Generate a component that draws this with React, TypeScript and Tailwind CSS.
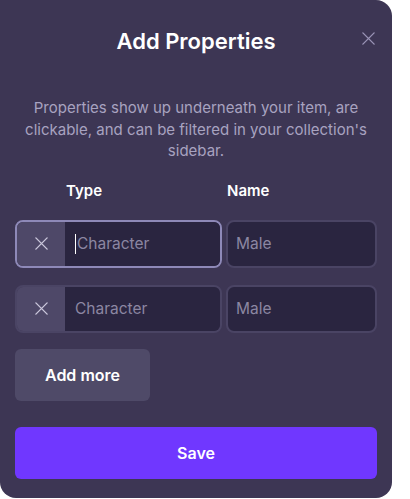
import { useState } from "react";

function XIcon({ className }: { className?: string }) {
  return (
    <svg viewBox="0 0 16 16" className={className} fill="none" stroke="currentColor" strokeWidth={1.5} strokeLinecap="round">
      <path d="M2 2l12 12M14 2L2 14" />
    </svg>
  );
}

function PropertyRow({ focused }: { focused?: boolean }) {
  return (
    <div className="flex gap-[4px] h-[48px]">
      <div
        className={
          "flex w-[207px] rounded-[8px] border-2 overflow-hidden " +
          (focused ? "border-[#8e89b8]" : "border-[#4a4464]")
        }
      >
        <button className="w-[48px] shrink-0 bg-[#4e4868] flex items-center justify-center text-[#c9c5da]">
          <XIcon className="w-[15px] h-[15px]" />
        </button>
        <div className="flex-1 bg-[#2a2540] flex items-center pl-[10px]">
          {focused && <span className="w-px h-[20px] bg-white mr-px" />}
          <span className="text-[15.5px] text-[#8c87a2]">Character</span>
        </div>
      </div>
      <div className="flex-1 rounded-[8px] border-2 border-[#4a4464] bg-[#2a2540] flex items-center pl-[8px]">
        <span className="text-[15.5px] text-[#8c87a2]">Male</span>
      </div>
    </div>
  );
}

export default function App() {
  const [rows] = useState([true, false]);

  return (
    <main className="min-h-screen bg-white" style={{ fontFamily: "Inter, 'Noto Sans', sans-serif" }}>
      <div className="relative w-[392px] h-[498px] bg-[#3d3654] rounded-tr-[16px] rounded-b-[16px] px-[15px] pt-[27px] text-white">
        <h1 className="text-[22px] leading-[28px] font-semibold text-center">Add Properties</h1>
        <button className="absolute right-[16px] top-[31px] text-[#9a94b6]">
          <XIcon className="w-[15px] h-[15px]" />
        </button>

        <p className="mt-[42px] text-[15px] leading-[21.5px] text-center text-[#a8a3c0]">
          Properties show up underneath your item, are clickable, and can be filtered in your collection's sidebar.
        </p>

        <div className="mt-[19px] flex text-[15px] leading-[20px] font-semibold">
          <span className="ml-[51px] w-[161px]">Type</span>
          <span>Name</span>
        </div>

        <div className="mt-[19px] flex flex-col gap-[17px]">
          {rows.map((f, i) => (
            <PropertyRow key={i} focused={f} />
          ))}
        </div>

        <button className="mt-[16px] w-[135px] h-[52px] rounded-[6px] bg-[#4f4a68] text-[16px] font-semibold">
          Add more
        </button>

        <button className="mt-[26px] w-full h-[52px] rounded-[6px] bg-[#7037ff] text-[16px] font-semibold">
          Save
        </button>
      </div>
    </main>
  );
}
